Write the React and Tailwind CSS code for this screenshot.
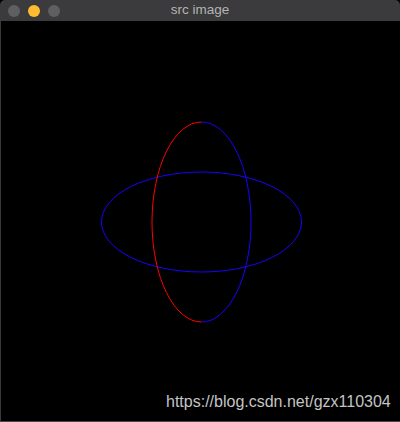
const TitleBar = () => (
  <div className="relative h-[21px] bg-[#3b3a3c] flex items-center px-[8px] gap-[8px] rounded-t-[5px]">
    <span className="w-[12px] h-[12px] rounded-full bg-[#5f5e60]" />
    <span className="w-[12px] h-[12px] rounded-full bg-[#febc2e]" />
    <span className="w-[12px] h-[12px] rounded-full bg-[#5f5e60]" />
    <span className="absolute inset-0 flex items-center justify-center text-[13.5px] text-[#b4b4b4] font-['Liberation_Sans',Arial,sans-serif]">
      src image
    </span>
  </div>
);

export default function App() {
  return (
    <div className="w-[400px] h-[422px] bg-black flex flex-col">
      <TitleBar />
      <div className="relative flex-1 bg-black border-l border-[#3a3a3a] border-b border-b-[#4a4a4a]">
        <svg width="399" height="400" viewBox="0 0 399 400" className="block">
          <ellipse cx="200.5" cy="201" rx="100" ry="50" fill="none" stroke="#1a00ff" strokeWidth="1" />
          <path d="M200.5 101 A49.5 100 0 0 0 200.5 301" fill="none" stroke="#ff0000" strokeWidth="1" />
          <path d="M200.5 101 A49.5 100 0 0 1 200.5 301" fill="none" stroke="#1a00ff" strokeWidth="1" />
        </svg>
        <span className="absolute left-[165px] top-[371px] text-[16px] leading-[20px] text-[#c4c4c4] font-['Liberation_Sans',Arial,sans-serif]">
          https://blog.csdn.net/gzx110304
        </span>
      </div>
    </div>
  );
}
